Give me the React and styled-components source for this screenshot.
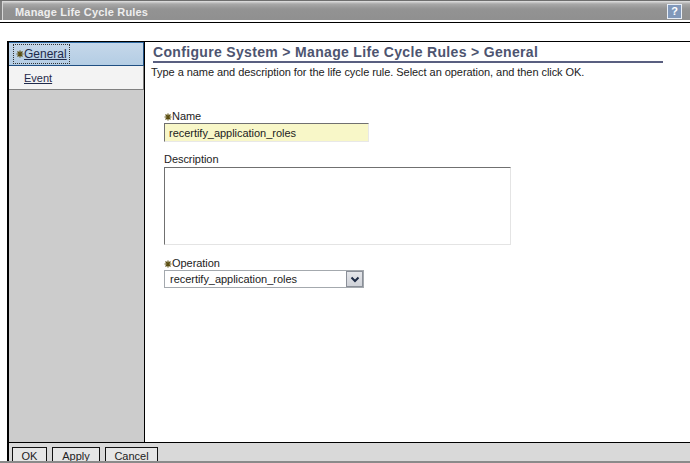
import React from 'react'
import styled, { createGlobalStyle } from 'styled-components'

const Global = createGlobalStyle`
  html, body {
    margin: 0;
    padding: 0;
    background: #fff;
    overflow: hidden;
  }
  body {
    font-family: "Liberation Sans", Arial, sans-serif;
    font-size: 11px;
  }
`

const Page = styled.div`
  width: 690px;
  height: 463px;
  display: flex;
  flex-direction: column;
  overflow: hidden;
  background: #fff;
`

const TitleBar = styled.div`
  height: 23px;
  box-sizing: border-box;
  flex: none;
  display: flex;
  align-items: center;
  justify-content: space-between;
  padding: 1px 8px 2px 15px;
  border-top: 1px solid #6e6e6e;
  border-bottom: 1px solid #000;
  box-shadow: inset 0 -2px 0 #fff, inset 2px 0 0 #808080, inset 3px 0 0 #d8d8d8;
  background: linear-gradient(#e2e2e2 0, #a8a8a8 3px, #939393 8px, #8f8f8f 100%);
`

const Title = styled.div`
  color: #eee;
  font-size: 11px;
  font-weight: bold;
  line-height: 14px;
  letter-spacing: 0.18px;
  margin-top: 1px;
`

const HelpButton = styled.div`
  width: 13px;
  height: 13px;
  border: 1px solid #e8eef6;
  background: #8198ba;
  color: #fff;
  font: bold 11px/13px "Liberation Sans", sans-serif;
  text-align: center;
`

const Spacer = styled.div`
  height: 18px;
  flex: none;
`

const Workspace = styled.div`
  flex: 1;
  display: flex;
  margin-left: 7px;
  min-height: 0;
  border-top: 1px solid #000;
  border-left: 2px solid #000;
`

const Nav = styled.div`
  width: 135px;
  flex: none;
  background: #cccccc;
  border-right: 1px solid #000;
`

const NavItem = styled.div`
  height: 23px;
  display: flex;
  align-items: center;
  padding-left: ${p => (p.$active ? '4px' : '15px')};
  background: ${p => (p.$active ? 'linear-gradient(#c6d8ea, #b4cde4)' : '#f3f3f3')};
  box-shadow: ${p => (p.$active ? 'inset 0 1px 0 #2f6aa3' : 'none')};
  border-bottom: 1px solid ${p => (p.$active ? '#1f4f82' : '#808080')};
  border-right: 1px solid ${p => (p.$active ? '#1f4f82' : '#808080')};
`

const NavFocus = styled.span`
  display: inline-flex;
  align-items: center;
  height: 18px;
  padding: 0 2px;
  border: 1px dotted #333;
`

const NavLink = styled.a`
  color: #1f2a4a;
  font-size: ${p => (p.$active ? '12px' : '11px')};
  text-decoration: underline;
`

const StarMark = styled.svg`
  width: 8px;
  height: 8px;
  flex: none;
  vertical-align: -0.5px;
  stroke: #5c4f12;
  stroke-width: 1.2;
`

const Star = () => (
  <StarMark viewBox="0 0 8 8">
    <path d="M4 0.5 V7.5 M0.5 4 H7.5 M1.5 1.5 L6.5 6.5 M6.5 1.5 L1.5 6.5" fill="none" />
  </StarMark>
)

const Main = styled.div`
  flex: 1;
  min-width: 0;
  display: flex;
  flex-direction: column;
  padding: 3px 0 0 6px;
`

const Heading = styled.h1`
  margin: 0 0 0 2px;
  width: 510px;
  box-sizing: border-box;
  height: 18px;
  border-bottom: 2px solid #595f80;
  color: #4d5470;
  font-size: 14px;
  font-weight: bold;
  line-height: 15px;
  letter-spacing: 0.33px;
  white-space: nowrap;
`

const Intro = styled.p`
  margin: 2px 0 0;
  color: #222;
  font-size: 11px;
  line-height: 14px;
  letter-spacing: -0.055px;
`

const Form = styled.div`
  display: flex;
  flex-direction: column;
  margin: 31px 0 0 13px;
`

const Field = styled.div`
  display: flex;
  flex-direction: column;
  margin-bottom: ${p => p.$gap}px;
`

const Label = styled.label`
  color: #222;
  font-size: 11px;
  line-height: 13px;
  height: 13px;
  letter-spacing: -0.05px;
  margin-bottom: ${p => p.$mb}px;
`

const TextInput = styled.div`
  width: 205px;
  height: 19px;
  box-sizing: border-box;
  padding-left: 4px;
  background: #f8f7c8;
  border-top: 1px solid #707070;
  border-left: 1px solid #707070;
  border-right: 1px solid #e8e8e8;
  border-bottom: 1px solid #e8e8e8;
  color: #222;
  font-size: 11px;
  line-height: 18px;
  letter-spacing: -0.03px;
`

const TextArea = styled.div`
  width: 347px;
  height: 78px;
  box-sizing: border-box;
  background: #fff;
  border-top: 1px solid #707070;
  border-left: 1px solid #707070;
  border-right: 1px solid #e4e4e4;
  border-bottom: 1px solid #e4e4e4;
`

const Select = styled.div`
  width: 200px;
  height: 18px;
  box-sizing: border-box;
  display: flex;
  align-items: center;
  justify-content: space-between;
  border: 1px solid #a4a9ae;
  padding: 0 0 0 5px;
  color: #222;
  font-size: 11px;
  letter-spacing: -0.03px;
`

const SelectArrow = styled.div`
  width: 17px;
  height: 16px;
  box-sizing: border-box;
  display: flex;
  align-items: center;
  justify-content: center;
  background: linear-gradient(#e4e6ea, #cfd2d8);
  border: 1px solid #8a8f98;
`

const Footer = styled.div`
  height: 19px;
  flex: none;
  box-sizing: border-box;
  margin-left: 7px;
  display: flex;
  gap: 5px;
  padding: 4px 0 0 3px;
  background: #d9d9d9;
  border-top: 1px solid #000;
  border-left: 2px solid #000;
  overflow: hidden;
`

const BottomRule = styled.div`
  height: 2px;
  flex: none;
  background: #8a8a8a;
`

const Button = styled.div`
  width: ${p => p.$w}px;
  height: 20px;
  flex: none;
  box-sizing: border-box;
  border: 1px solid #111;
  background: #e6e6e6;
  color: #222;
  font-size: 11px;
  line-height: 17px;
  text-align: center;
`

const App = () => (
  <Page>
    <Global />
    <TitleBar>
      <Title>Manage Life Cycle Rules</Title>
      <HelpButton>?</HelpButton>
    </TitleBar>
    <Spacer />
    <Workspace>
      <Nav>
        <NavItem $active>
          <NavFocus>
            <Star />
            <NavLink $active>General</NavLink>
          </NavFocus>
        </NavItem>
        <NavItem>
          <NavLink>Event</NavLink>
        </NavItem>
      </Nav>
      <Main>
        <Heading>Configure System &gt; Manage Life Cycle Rules &gt; General</Heading>
        <Intro>Type a name and description for the life cycle rule. Select an operation, and then click OK.</Intro>
        <Form>
          <Field $gap={11}>
            <Label $mb={0}><Star />Name</Label>
            <TextInput>recertify_application_roles</TextInput>
          </Field>
          <Field $gap={12}>
            <Label $mb={1}>Description</Label>
            <TextArea />
          </Field>
          <Field $gap={0}>
            <Label $mb={0}><Star />Operation</Label>
            <Select>
              recertify_application_roles
              <SelectArrow>
                <svg width="10" height="7" viewBox="0 0 10 7">
                  <path d="M1.5 1.5 L5 5 L8.5 1.5" fill="none" stroke="#1d2b45" strokeWidth="2" />
                </svg>
              </SelectArrow>
            </Select>
          </Field>
        </Form>
      </Main>
    </Workspace>
    <Footer>
      <Button $w={35}>OK</Button>
      <Button $w={48}>Apply</Button>
      <Button $w={53}>Cancel</Button>
    </Footer>
    <BottomRule />
  </Page>
)

export default App
